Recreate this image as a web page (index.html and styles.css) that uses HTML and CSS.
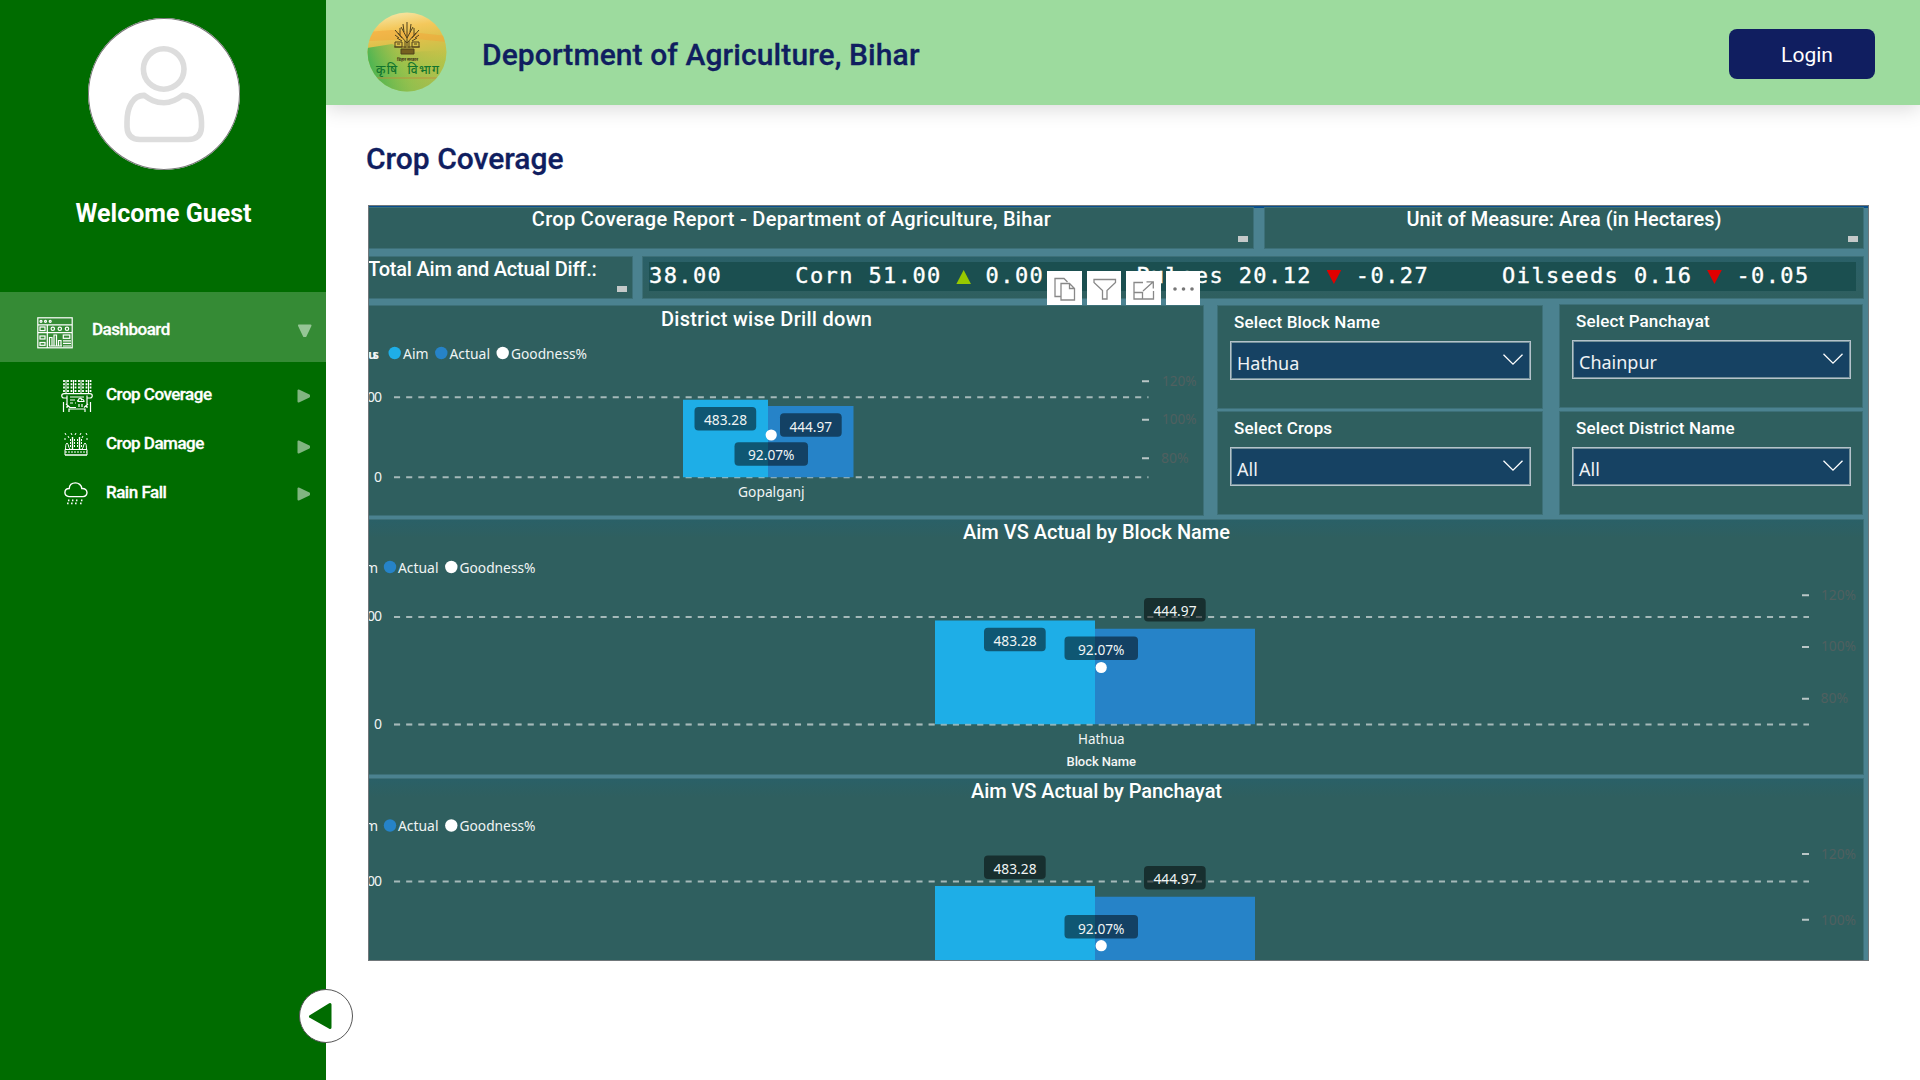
FILE: index.html
```html
<!DOCTYPE html>
<html lang="en">
<head>
<meta charset="utf-8">
<title>Crop Coverage</title>
<link rel="stylesheet" href="styles.css">
</head>
<body>
<aside class="sidebar">
  <div class="avatar">
    <svg width="152" height="152" viewBox="88 18 152 152" fill="none" stroke="#ddd" stroke-width="5.6" stroke-linejoin="round">
      <circle cx="163.700" cy="69" r="20.300"/>
      <path d="M144.500 95.400C133 95 127 107 127 122V127Q127.500 139.500 140 139.500H188Q201 139.500 201.500 127V122C201 107 194 95 182.500 95.400C178 99 172.500 102.700 164 102.700C155 102.700 150 99.500 144.500 95.400Z"/>
    </svg>
  </div>
  <p class="welcome">Welcome Guest</p>
  <nav class="menu">
    <a class="item parent">
      <svg class="icon" width="36" height="32" viewBox="0 0 36 32" fill="none" stroke="#fff" stroke-width="1.200">
        <rect x=".8" y=".8" width="34.400" height="30"/><path d="M1 7.800H35M1 15.600H35M10.300 8V31"/>
        <circle cx="4" cy="4.300" r="1"/><circle cx="8.500" cy="4.300" r="1"/><circle cx="13.200" cy="4.300" r="1"/>
        <rect x="3" y="10" width="5" height="3.600"/><rect x="3" y="19" width="5" height="3"/><rect x="3" y="25.500" width="5" height="2.800"/>
        <circle cx="15.800" cy="11.800" r="1.700"/><circle cx="22.800" cy="11.800" r="1.700"/><circle cx="30" cy="11.800" r="1.700"/>
        <path d="M12.500 29V20.500H15V29M17 29V18H19.500V29M21.500 29V23.500H24V29M12 29H25M26 23.800H34M26 26.400H34M26 29H34"/><rect x="26.300" y="18" width="6.500" height="3.300"/>
      </svg>
      <span class="label">Dashboard</span>
      <svg class="arrow" width="16" height="14" viewBox="0 0 16 14"><path d="M2 1.500H13.500L8.500 12H7Z" fill="#96c696" stroke="#96c696" stroke-width="2" stroke-linejoin="round"/></svg>
    </a>
    <a class="item sub cover">
      <svg class="icon" width="32" height="32" viewBox="0 0 32 32" fill="none" stroke="#fff" stroke-width="1.200">
        <path d="M5 0V14M12.500 0V14M20 0V14M27.500 0V14" stroke-width="1"/>
        <path d="M5 1.500H5.100M12.500 1.500H12.600M20 1.500H20.100M27.500 1.500H27.600" stroke-width="4"/>
        <g stroke-dasharray="2 1.300" stroke-width="1.800"><path d="M3 0V12M7 0V12M10.500 0V12M14.500 0V12M18 0V12M22 0V12M25.500 0V12M29.500 0V12"/></g>
        <path d="M3 18C0 18 0 13.600 3 13.600H29C32 13.600 32 18 29 18H26M3 18H6M6 15.500V28M26 15.500V28M2.500 22V32M29.500 22V32M5 24L9 27.500M27 24L23 27.500M8 32V29H24V32M9 17H23M8.500 27.500H15"/>
        <path d="M9 20H14M9 23H12M14 23H15M17 21.500H23C23 19.500 21 19 20.500 19.500C20 17.500 17.500 18 17.500 20.200Q16 20.500 17 21.500M18 24V27M21 24V27"/>
      </svg>
      <span class="label">Crop Coverage</span>
      <svg class="arrow" width="14" height="16" viewBox="0 0 14 16"><path d="M1.500 2.500V13.500L12 8.500V7.500Z" fill="#80b580" stroke="#80b580" stroke-width="2" stroke-linejoin="round"/></svg>
    </a>
    <a class="item sub damage">
      <svg class="icon" width="24" height="24" viewBox="0 0 24 24" fill="none" stroke="#fff" stroke-width="1">
        <path d="M1 17.500H23V23H1Z"/><path d="M1 20H23" stroke-dasharray="2 1"/><path d="M1 1L2 3M7 1L8 3M12 1L11 3M17 1L16 3M22 1L23 3M4 4L5 6M19 4L18 6M1 6V8M23 6V8M1 23H23"/>
        <path d="M8.500 5V17M15.500 5V17" stroke-width="1.400"/><path d="M6.500 7V15M10.500 7V15M13.500 7V15M17.500 7V15" stroke-dasharray="2 1"/>
        <path d="M1.500 17C2 14 1 13 3 11C5 13 4 15 6 17M22.500 17C22 14 23 13 21 11C19 13 20 15 18 17"/>
      </svg>
      <span class="label">Crop Damage</span>
      <svg class="arrow" width="14" height="16" viewBox="0 0 14 16"><path d="M1.500 2.500V13.500L12 8.500V7.500Z" fill="#80b580" stroke="#80b580" stroke-width="2" stroke-linejoin="round"/></svg>
    </a>
    <a class="item sub rain">
      <svg class="icon" width="24" height="24" viewBox="0 0 24 24" fill="none" stroke="#fff" stroke-width="1.400">
        <path d="M5 14.600C-.5 14.600 -.5 6.500 5.200 6.500C5.500 2.500 8.500 .9 11.500 .9C14.500 .9 17.500 3 17.800 6.500C24.500 6 24.500 14.600 19 14.600Z"/>
        <path d="M5 17.500L3.500 22.500M9 17.500L7.500 22.500M13 17.500L11.500 22.500M18 17.500L16.500 22.500" stroke-dasharray="1.800 1.300"/>
      </svg>
      <span class="label">Rain Fall</span>
      <svg class="arrow" width="14" height="16" viewBox="0 0 14 16"><path d="M1.500 2.500V13.500L12 8.500V7.500Z" fill="#80b580" stroke="#80b580" stroke-width="2" stroke-linejoin="round"/></svg>
    </a>
  </nav>
  <button class="collapse">
    <svg width="26" height="30" viewBox="0 0 26 30"><path d="M23 3.500V26.500L3.500 15.500Z" fill="#006c00" stroke="#006c00" stroke-width="3" stroke-linejoin="round"/></svg>
  </button>
</aside>
<div class="page">
  <header class="topbar">
    <svg class="logo" width="80" height="80" viewBox="0 0 80 80">
      <defs>
        <linearGradient id="sky" x1="0" y1="0" x2=".15" y2="1"><stop offset="0" stop-color="#f6eeb8"/><stop offset=".25" stop-color="#f4c85c"/><stop offset=".45" stop-color="#dcc04a"/><stop offset=".75" stop-color="#b0c54a"/><stop offset="1" stop-color="#a4c050"/></linearGradient>
        <linearGradient id="field" x1="0" y1=".2" x2="1" y2="0"><stop offset="0" stop-color="#50b552"/><stop offset=".4" stop-color="#80bf4c" stop-opacity=".5"/><stop offset="1" stop-color="#d0b040" stop-opacity="0"/></linearGradient>
        <clipPath id="disc"><circle cx="40" cy="40" r="39.500"/></clipPath>
      </defs>
      <g clip-path="url(#disc)">
        <path d="M0 0H80V80H0Z" fill="url(#sky)"/>
        <path d="M0 20L25 18L80 24V30L50 27L0 29Z" fill="#f3a437" opacity=".5"/>
        <path d="M0 36L25 32L45 40L80 38V80H0Z" fill="url(#field)"/>
        <path d="M4 66H76" stroke="#c08b3c" stroke-width="2" opacity=".4"/>
      </g>
      <g fill="none" stroke="#51421c" stroke-width="1">
        <path d="M40 34V14M40 31L31 21M40 31L49 21M40 26L34 15M40 26L46 15M35 26L28 18M45 26L52 18M33 23V16M47 23V16M37 20L36 12M43 20L44 12M40 14V10M30 26L35 29M50 26L45 29M28 23L32 26M52 23L48 26"/>
        <path d="M28 30H35V35H28ZM45 30H52V35H45ZM27 35H53M38 29V36M42 29V36M30 32H33M47 32H50"/><path d="M34 37H47V42H34Z" fill="#75601f"/>
      </g>
      <text x="30" y="48.500" font-size="4.500" font-weight="700" fill="#403818" textLength="21" lengthAdjust="spacingAndGlyphs">बिहार सरकार</text>
      <text x="9" y="62" font-size="12" font-weight="500" fill="#13752d" textLength="63" lengthAdjust="spacing" word-spacing="5">कृषि विभाग</text>
    </svg>
    <h1 class="title">Deportment of Agriculture, Bihar</h1>
    <button class="login">Login</button>
  </header>
  <main class="content">
    <h2 class="heading">Crop Coverage</h2>
    <section class="report">
      <div class="row head">
        <div class="panel name">Crop Coverage Report - Department of Agriculture, Bihar<i class="mark"></i></div>
        <div class="panel unit">Unit of Measure: Area (in Hectares)<i class="mark"></i></div>
      </div>
      <div class="row figures">
        <div class="panel diff">Total Aim and Actual Diff.:<i class="mark"></i></div>
        <div class="panel ticker">
          <div class="tape"><span>38.00</span><span class="corn">Corn 51.00 <b class="tri up"></b> 0.00</span><span>Pulses 20.12 <b class="tri down"></b> -0.27</span><span>Oilseeds 0.16 <b class="tri down"></b> -0.05</span></div>
        </div>
      </div>
      <div class="row middle">
        <div class="panel district">
          <svg class="chart" width="834" height="209" viewBox="369 306 834 209">
            <text class="t" x="661" y="326" textLength="211">District wise Drill down</text>
            <text class="s b" x="368" y="358.500" textLength="11">us</text>
            <circle class="aim" cx="394.700" cy="353" r="6.200"/><text class="s" x="403" y="358.500" textLength="25.500" lengthAdjust="spacingAndGlyphs">Aim</text>
            <circle class="act" cx="441.300" cy="353" r="6.200"/><text class="s" x="449.500" y="358.500" textLength="40.500" lengthAdjust="spacingAndGlyphs">Actual</text>
            <circle class="dot" cx="502.700" cy="353" r="6.200"/><text class="s" x="511" y="358.500" textLength="76" lengthAdjust="spacingAndGlyphs">Goodness%</text>
            <text class="s" x="367" y="401.500" textLength="15">00</text><text class="s" x="374" y="482">0</text>
            <path class="grid" d="M394 397.200H1148.500M394 477.300H1148.500"/>
            <path class="aim" d="M683 399.700H768V477.300H683Z"/><path class="act" d="M768 406H853.500V477.300H768Z"/>
            <rect class="tag" x="694.500" y="407" width="61.700" height="23.500" rx="4"/><text class="s" x="704" y="425.200" textLength="43" lengthAdjust="spacingAndGlyphs">483.28</text>
            <rect class="tag" x="780" y="413.300" width="61.700" height="23.500" rx="4"/><text class="s" x="789.500" y="432" textLength="42.500" lengthAdjust="spacingAndGlyphs">444.97</text>
            <rect class="tag" x="734.500" y="442.300" width="73.500" height="23.500" rx="4"/><text class="s" x="748" y="460.300" textLength="46.500" lengthAdjust="spacingAndGlyphs">92.07%</text>
            <circle class="dot" cx="771.200" cy="435" r="5.600"/>
            <text class="s" x="738" y="496.700" textLength="66.500" lengthAdjust="spacingAndGlyphs">Gopalganj</text>
            <path class="tick" d="M1142 381.300H1149M1142 419.700H1149M1142 458.200H1149"/>
            <text class="s f" x="1162" y="385.500" textLength="34.500" lengthAdjust="spacingAndGlyphs">120%</text><text class="s f" x="1162" y="424.300" textLength="34.500" lengthAdjust="spacingAndGlyphs">100%</text><text class="s f" x="1161" y="462.500" textLength="27.500" lengthAdjust="spacingAndGlyphs">80%</text>
          </svg>
          <div class="tools">
            <span><svg width="34" height="34" viewBox="0 0 34 34"><path d="M14 25.500H8V7.500H17L20.500 11M14 12.500H22.500L27.500 17.500V29H14ZM22.500 12.500V17.500H27.500"/></svg></span>
            <span><svg width="34" height="34" viewBox="0 0 34 34"><path d="M7 8.500H28.500V11.500L20 19.500V28H15.500V19.500L7 11.500Z"/></svg></span>
            <span><svg width="34" height="34" viewBox="0 0 34 34"><path d="M17 11.500H8V28H27.500V20M8 21.500H16.500V28M17 20L27 11M20.500 10.800H27.300V17.500"/></svg></span>
            <span><svg width="34" height="34" viewBox="0 0 34 34"><g fill="#777" stroke="none"><circle cx="9" cy="18" r="1.800"/><circle cx="17.500" cy="18" r="1.800"/><circle cx="26" cy="18" r="1.800"/></g></svg></span>
          </div>
        </div>
        <div class="filters left">
          <div class="panel filter"><label>Select Block Name</label><div class="select">Hathua<svg width="20" height="12" viewBox="0 0 20 12"><path d="M.5 .7L10 10.200L19.500 .7"/></svg></div></div>
          <div class="panel filter"><label>Select Crops</label><div class="select">All<svg width="20" height="12" viewBox="0 0 20 12"><path d="M.5 .7L10 10.200L19.500 .7"/></svg></div></div>
        </div>
        <div class="filters right">
          <div class="panel filter upper"><label>Select Panchayat</label><div class="select">Chainpur<svg width="20" height="12" viewBox="0 0 20 12"><path d="M.5 .7L10 10.200L19.500 .7"/></svg></div></div>
          <div class="panel filter"><label>Select District Name</label><div class="select">All<svg width="20" height="12" viewBox="0 0 20 12"><path d="M.5 .7L10 10.200L19.500 .7"/></svg></div></div>
        </div>
      </div>
      <div class="panel block">
        <svg class="chart" width="1494" height="254" viewBox="369 520 1494 254">
          <text class="t" x="963" y="539" textLength="267">Aim VS Actual by Block Name</text>
          <text class="s" x="365" y="572.500">m</text>
          <circle class="act" cx="390" cy="567" r="6.200"/><text class="s" x="398" y="572.500" textLength="40.500" lengthAdjust="spacingAndGlyphs">Actual</text>
          <circle class="dot" cx="451.300" cy="567" r="6.200"/><text class="s" x="459.500" y="572.500" textLength="76" lengthAdjust="spacingAndGlyphs">Goodness%</text>
          <text class="s" x="367" y="621.200" textLength="15">00</text><text class="s" x="374" y="729">0</text>
          <path class="grid" d="M394 617H1809M394 724.500H1809"/>
          <path class="aim" d="M935 620.500H1095V724.200H935Z"/><path class="act" d="M1095 628.700H1255V724.200H1095Z"/>
          <path class="grid" d="M394 724.500H1255" opacity=".3"/>
          <rect class="tag" x="984" y="627.700" width="61.700" height="23.500" rx="4"/><text class="s" x="993.500" y="646" textLength="43" lengthAdjust="spacingAndGlyphs">483.28</text>
          <rect class="tag" x="1144" y="598" width="61.700" height="23.500" rx="4"/><text class="s" x="1153.500" y="615.700" textLength="43" lengthAdjust="spacingAndGlyphs">444.97</text>
          <rect class="tag" x="1064.500" y="636.500" width="73.500" height="23.500" rx="4"/><text class="s" x="1078" y="655" textLength="46.500" lengthAdjust="spacingAndGlyphs">92.07%</text>
          <circle class="dot" cx="1101.200" cy="667.500" r="5.600"/>
          <text class="s" x="1078" y="744" textLength="46.500" lengthAdjust="spacingAndGlyphs">Hathua</text><text class="axis" x="1066.500" y="765.500" textLength="69.500">Block Name</text>
          <path class="tick" d="M1802 595.300H1809M1802 647H1809M1802 698.700H1809"/>
          <text class="s f" x="1821" y="600" textLength="35" lengthAdjust="spacingAndGlyphs">120%</text><text class="s f" x="1821" y="651" textLength="35" lengthAdjust="spacingAndGlyphs">100%</text><text class="s f" x="1820.500" y="703" textLength="27.500" lengthAdjust="spacingAndGlyphs">80%</text>
        </svg>
      </div>
      <div class="panel panchayat">
        <svg class="chart" width="1494" height="181" viewBox="369 779 1494 181">
          <text class="t" x="971" y="798" textLength="251">Aim VS Actual by Panchayat</text>
          <text class="s" x="365" y="831">m</text>
          <circle class="act" cx="390" cy="825.500" r="6.200"/><text class="s" x="398" y="831" textLength="40.500" lengthAdjust="spacingAndGlyphs">Actual</text>
          <circle class="dot" cx="451.300" cy="825.500" r="6.200"/><text class="s" x="459.500" y="831" textLength="76" lengthAdjust="spacingAndGlyphs">Goodness%</text>
          <text class="s" x="367" y="886.300" textLength="15">00</text>
          <path class="grid" d="M394 881.500H1809"/>
          <path class="aim" d="M935 886H1095V960H935Z"/><path class="act" d="M1095 896.700H1255V960H1095Z"/>
          <rect class="tag" x="984" y="855.500" width="61.700" height="23.500" rx="4"/><text class="s" x="993.500" y="873.500" textLength="43" lengthAdjust="spacingAndGlyphs">483.28</text>
          <rect class="tag" x="1144" y="866" width="61.700" height="23.500" rx="4"/><text class="s" x="1153.500" y="884.300" textLength="43" lengthAdjust="spacingAndGlyphs">444.97</text>
          <rect class="tag" x="1064.500" y="915" width="73.500" height="23.500" rx="4"/><text class="s" x="1078" y="933.500" textLength="46.500" lengthAdjust="spacingAndGlyphs">92.07%</text>
          <circle class="dot" cx="1101.200" cy="945.700" r="5.600"/>
          <path class="tick" d="M1802 854H1809M1802 919.700H1809"/>
          <text class="s f" x="1821" y="859" textLength="35" lengthAdjust="spacingAndGlyphs">120%</text><text class="s f" x="1821" y="925" textLength="35" lengthAdjust="spacingAndGlyphs">100%</text>
        </svg>
      </div>
    </section>
  </main>
</div>
</body>
</html>
```
FILE: styles.css
```css
* { box-sizing: border-box; margin: 0; padding: 0; }
body { display: flex; width: 1920px; height: 1080px; overflow: hidden; background: #fff; font-family: Roboto, sans-serif; }
svg { display: block; flex: none; }
button { border: 0; font: inherit; }

.sidebar { position: relative; z-index: 2; flex: none; width: 326px; height: 1080px; padding-top: 18px; background: #006c00; color: #fff; }
.avatar { width: 152px; height: 152px; margin-left: 88px; border-radius: 50%; background: #fff; box-shadow: inset 0 0 0 1px #777; }
.welcome { margin-top: 29px; height: 30px; padding-left: 1px; line-height: 30px; text-align: center; font-size: 25px; font-weight: 700; }
.menu { margin-top: 63px; }
.item { display: flex; align-items: flex-start; white-space: nowrap; }
.label { font-size: 17px; font-weight: 500; line-height: 20px; letter-spacing: -.5px; -webkit-text-stroke: .3px #fff; }
.arrow { margin-left: auto; }
.parent { height: 70px; padding: 25px 13px 0 37px; background: #358b35; }
.parent .label { margin: 2px 0 0 19px; }
.parent .arrow { margin-top: 7px; }
.sub { padding: 0 15px 0 61px; }
.cover { margin-top: 18px; height: 52px; }
.cover .label { margin: 4px 0 0 13px; }
.cover .arrow { margin-top: 8px; }
.damage { height: 50px; padding-left: 64px; }
.damage .label { margin: 1px 0 0 18px; }
.damage .arrow { margin-top: 7px; }
.rain { padding-left: 64px; }
.rain .label { margin-left: 18px; }
.rain .arrow { margin-top: 4px; }
.collapse { position: absolute; left: 299px; top: 989px; display: flex; align-items: center; width: 54px; height: 54px; padding-left: 7px; border: 1px solid #555; border-radius: 50%; background: #fff; }

.page { flex: 1; }
.topbar { display: flex; align-items: center; height: 105px; padding: 0 45px 0 41px; background: #9ddb9e; box-shadow: 0 3px 20px rgba(0,0,0,.16); color: #101e60; }
.logo { margin-top: -1px; font-family: "Noto Sans", sans-serif; }
.title { margin: 5px 0 0 35px; font-size: 30px; font-weight: 500; line-height: 40px; letter-spacing: .09px; white-space: nowrap; -webkit-text-stroke: .3px #101e60; }
.login { width: 146px; height: 50px; margin: 3px 0 0 auto; padding: 1px 0 0 10px; border-radius: 8px; background: #101e60; color: #fff; font-size: 21px; }
.content { padding: 34px 0 0 42px; }
.heading { height: 40px; line-height: 40px; margin-left: -2px; color: #101e60; font-size: 30px; font-weight: 500; -webkit-text-stroke: .3px #101e60; }

.report { width: 1501px; height: 756px; margin-top: 26px; padding: 2px 5px 0 0; overflow: hidden; border: 1px solid #70777a; background: linear-gradient(#084e8d 0 2px, #4b8290 2px); color: #fff; }
.panel { background: #2f5f5f; box-shadow: 0 0 0 1px #3d7078; }
.row { display: flex; }
.head .panel, .diff { position: relative; font-size: 20px; font-weight: 500; line-height: 23px; text-align: center; white-space: nowrap; }
.head { height: 40px; }
.name { width: 884px; padding-right: 39px; letter-spacing: .3px; }
.unit { width: 598px; margin-left: 12px; }
.mark { position: absolute; right: 5px; bottom: 6px; width: 10px; height: 6px; background: #c4c9c9; }
.figures { height: 41px; margin-top: 9px; }
.diff { width: 263px; letter-spacing: -.2px; }
.head .panel.name { text-align: center; }
.panel.diff { text-align: left; text-indent: -1px; line-height: 24px; }
.ticker { width: 1220px; margin-left: 11px; padding: 5px 7px 7px 6px; background: linear-gradient(#2a6068, #2f5f5f); }
.tape { display: flex; gap: 73px; height: 29px; background: #1b4f50; font: 22px/27px "DejaVu Sans Mono", monospace; letter-spacing: 1.400px; white-space: pre; -webkit-text-stroke: .35px #fff; }
.corn { margin-right: 19px; }
.tri { display: inline-block; width: 14.640px; height: 14px; margin-bottom: -1px; }
.up { background: #98c800; clip-path: polygon(0 100%, 50% 0, 100% 100%); }
.down { background: #e10000; clip-path: polygon(0 0, 100% 0, 50% 100%); }

.middle { height: 209px; margin-top: 8px; }
.district { position: relative; width: 834px; }
.tools { position: absolute; top: -35px; right: 3px; display: flex; gap: 5px; }
.tools span { width: 34.500px; height: 34px; background: #fff; }
.tools svg { fill: none; stroke: #888; stroke-width: 1.300; }
.filters { display: flex; flex-direction: column; gap: 4px; }
.left { width: 324px; margin-left: 15px; }
.right { width: 302px; margin: -1px 0 0 18px; gap: 5px; }
.filter { height: 102px; padding: 5px 11px 0 12px; }
.filter label { display: block; height: 30px; padding-left: 4px; font-size: 17px; font-weight: 500; line-height: 23px; letter-spacing: .15px; }
.select { display: flex; align-items: center; justify-content: space-between; height: 39px; padding: 5px 7px 0 6px; border: 1px solid #b4c2cb; outline: 1px solid #73909a; outline-offset: -2px; background: #164263; color: #eef2f5; font: 18px/30px "Noto Sans", sans-serif; }
.select svg { margin-top: -6px; fill: none; stroke: #fff; stroke-width: 1.300; }
.block { height: 254px; margin-top: 5px; background: linear-gradient(#2a6067, #2f5f5f 18px); }
.panchayat { height: 181px; margin-top: 5px; background: linear-gradient(#2a6067, #2f5f5f 18px); }
.panel.block, .panel.panchayat { width: 1494px; }

.t { fill: #fff; font: 500 20px Roboto, sans-serif; }
.s { fill: #f0f4f4; font: 14px "Noto Sans", sans-serif; }
.b { font-weight: 700; font-size: 13px; }
.f { fill: #50605f; }
.axis { fill: #f4f6f6; font: 500 13px Roboto, sans-serif; }
.aim { fill: #1eaee7; }
.act { fill: #2683c8; }
.dot { fill: #fff; }
.tag { fill: #000; opacity: .5; }
.grid { fill: none; stroke: #a5b9b9; stroke-width: 2; stroke-dasharray: 6.100 6.050; }
.tick { stroke: #b9c6c6; stroke-width: 2; }
```
